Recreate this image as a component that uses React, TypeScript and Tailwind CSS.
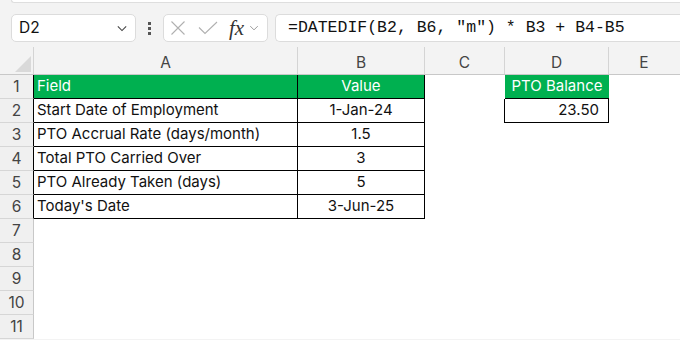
import React from "react";

type Row = {
  n: number;
  a?: string;
  b?: string;
  d?: string;
};

const rows: Row[] = [
  { n: 1, a: "Field", b: "Value", d: "PTO Balance" },
  { n: 2, a: "Start Date of Employment", b: "1-Jan-24", d: "23.50" },
  { n: 3, a: "PTO Accrual Rate (days/month)", b: "1.5" },
  { n: 4, a: "Total PTO Carried Over", b: "3" },
  { n: 5, a: "PTO Already Taken (days)", b: "5" },
  { n: 6, a: "Today's Date", b: "3-Jun-25" },
  { n: 7 },
  { n: 8 },
  { n: 9 },
  { n: 10 },
  { n: 11 },
];

const Chevron = ({ className }: { className?: string }) => (
  <svg viewBox="0 0 12 8" className={className} fill="none" stroke="currentColor" strokeWidth="1.3">
    <path d="M1 1.5 L6 6.5 L11 1.5" />
  </svg>
);

const FormulaBar = () => (
  <div className="flex h-[28px] items-stretch mt-[11px]">
    <div className="ml-[11px] w-[125px] bg-white border border-[#dcdcdc] rounded-[5px] flex items-center justify-between pl-[7px] pr-[8px]">
      <span className="text-[15.5px] text-[#111]">D2</span>
      <Chevron className="w-[10px] h-[7px] text-[#444]" />
    </div>
    <div className="w-[27px] flex flex-col items-center justify-center gap-[2px]">
      <span className="w-[3px] h-[3px] bg-[#555]" />
      <span className="w-[3px] h-[3px] bg-[#555]" />
      <span className="w-[3px] h-[3px] bg-[#555]" />
    </div>
    <div className="w-[105px] bg-white border border-[#dcdcdc] rounded-[5px] flex items-center pl-[6px]">
      <svg viewBox="0 0 16 16" className="w-[16px] h-[16px] text-[#b0b0b0]" fill="none" stroke="currentColor" strokeWidth="1.1">
        <path d="M1.5 1.5 L14.5 14.5 M14.5 1.5 L1.5 14.5" />
      </svg>
      <svg viewBox="0 0 20 14" className="ml-[12px] w-[20px] h-[14px] text-[#b0b0b0]" fill="none" stroke="currentColor" strokeWidth="1.1">
        <path d="M1 6.5 L7 12.5 L19 1" />
      </svg>
      <span className="ml-[11px] text-[21px] italic text-[#333] leading-none font-['Liberation_Serif',serif]">
        fx
      </span>
      <Chevron className="ml-[5px] w-[10px] h-[6px] text-[#999]" />
    </div>
    <div className="ml-[7px] flex-1 bg-white border border-r-0 border-[#dcdcdc] rounded-l-[5px] flex items-center pl-[12px]">
      <span className="text-[16.5px] text-[#111] whitespace-pre font-['Liberation_Mono',monospace]">
        =DATEDIF(B2, B6, "m") * B3 + B4-B5
      </span>
    </div>
  </div>
);

const colHeads = [
  { l: "A", w: "w-[264px]" },
  { l: "B", w: "w-[127px]" },
  { l: "C", w: "w-[80px]" },
  { l: "D", w: "w-[104px]" },
];

const HeaderRow = () => (
  <div className="flex h-[28px] mt-[5px] border-b border-[#c8c8c8] text-[#444] text-[15.5px]">
    <div className="w-[34px] shrink-0 relative border-r border-[#d4d4d4]">
      <div className="absolute left-[15px] bottom-[2px] w-0 h-0 border-l-[16px] border-l-transparent border-b-[16px] border-b-[#d9d9d9]" />
    </div>
    {colHeads.map((c) => (
      <div key={c.l} className={`${c.w} shrink-0 border-r border-[#d4d4d4] flex items-center justify-center pt-[4px]`}>
        {c.l}
      </div>
    ))}
    <div className="flex-1 flex items-center justify-center pt-[4px] pr-[1px]">E</div>
  </div>
);

const SheetRow = ({ r }: { r: Row }) => {
  const inTable = r.n <= 6;
  const head = r.n === 1;
  return (
    <div className="flex h-[24px] text-[15px] text-[#111]">
      <div
        className={`w-[34px] shrink-0 bg-[#f0f0f0] border-b border-b-[#d6d6d6] border-r flex items-center justify-center text-[#444] text-[15.5px] ${
          inTable ? "border-r-black" : "border-r-[#c8c8c8]"
        }`}
      >
        {r.n}
      </div>
      <div
        className={`w-[264px] shrink-0 flex items-center pl-[3px] ${
          inTable ? "border-r border-b border-black" : ""
        } ${head ? "bg-[#00b050] text-white" : ""}`}
      >
        {r.a}
      </div>
      <div
        className={`w-[127px] shrink-0 flex items-center justify-center ${
          inTable ? "border-r border-b border-black" : ""
        } ${head ? "bg-[#00b050] text-white" : ""}`}
      >
        {r.b}
      </div>
      <div className={`w-[80px] shrink-0 ${r.n === 2 ? "border-r border-black" : ""}`} />
      <div
        className={`w-[104px] shrink-0 flex items-center ${
          r.n === 1 ? "bg-[#00b050] text-white justify-center border-b border-black" : ""
        } ${r.n === 2 ? "justify-end pr-[9px] border-r border-b border-black" : ""}`}
      >
        {r.d}
      </div>
      <div className="flex-1" />
    </div>
  );
};

export default function App() {
  return (
    <div className="w-[680px] h-[340px] overflow-hidden bg-[#f3f3f3] font-['Inter','Liberation_Sans',sans-serif]">
      <div className="ml-[11px] h-[3px] bg-white border-b border-l border-[#dedede] rounded-bl-[5px]" />
      <FormulaBar />
      <HeaderRow />
      <div className="bg-white">
        {rows.map((r) => (
          <SheetRow key={r.n} r={r} />
        ))}
      </div>
    </div>
  );
}
